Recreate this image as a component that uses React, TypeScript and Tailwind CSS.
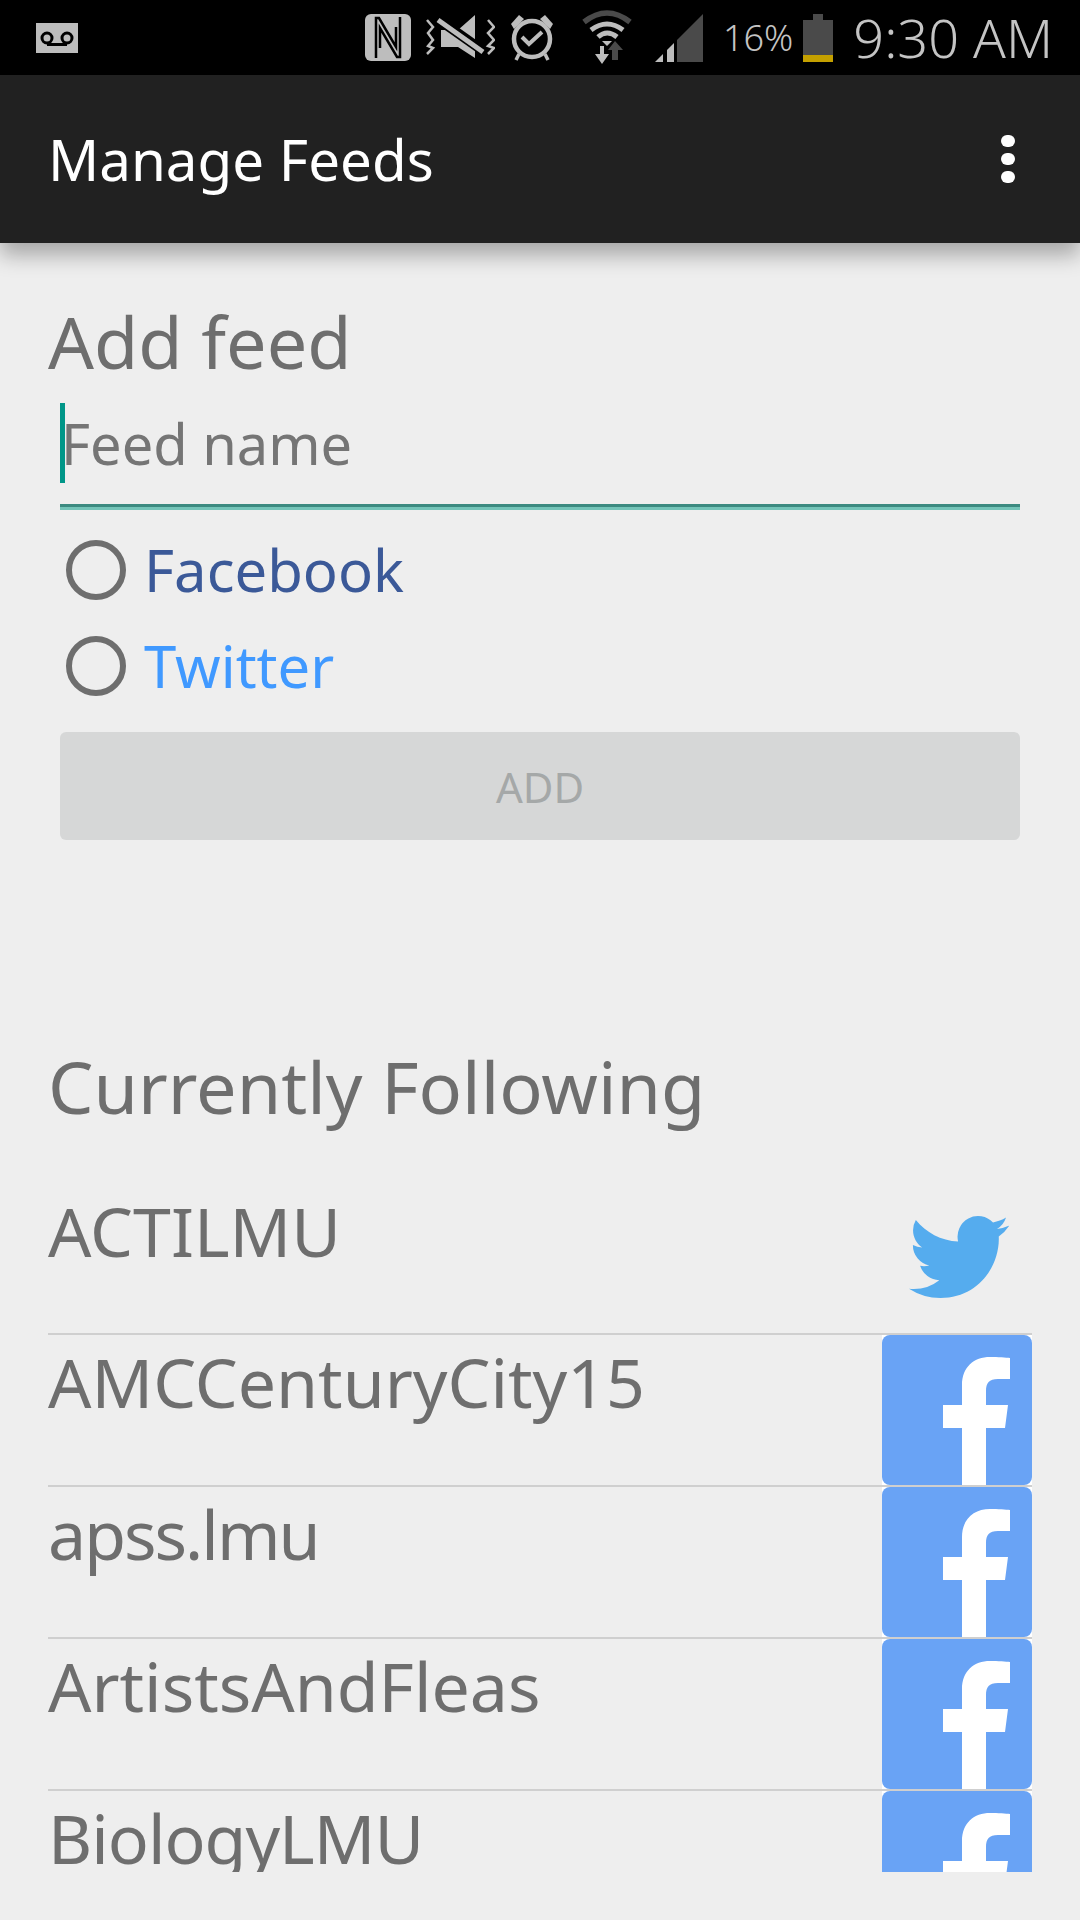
const FEEDS = [
  { name: 'AMCCenturyCity15', tracking: '' },
  { name: 'apss.lmu', tracking: 'tracking-[-2px]' },
  { name: 'ArtistsAndFleas', tracking: '' },
  { name: 'BiologyLMU', tracking: 'tracking-[-1px]' },
]

function Voicemail() {
  return (
    <svg width="42" height="30" viewBox="0 0 42 30">
      <rect width="42" height="30" fill="#bdbdbd" />
      <circle cx="11" cy="15" r="5" fill="none" stroke="#000" strokeWidth="3" />
      <circle cx="31" cy="15" r="5" fill="none" stroke="#000" strokeWidth="3" />
      <path d="M11 21.5H31" stroke="#000" strokeWidth="3" />
    </svg>
  )
}

function NfcIcon() {
  return (
    <svg width="46" height="47" viewBox="0 0 46 47">
      <rect width="46" height="47" rx="6" fill="#bdbdbd" />
      <path d="M11 44V4H14L31 33V13" fill="none" stroke="#000" strokeWidth="2.5" />
      <path d="M35 3V43H32L15 14V34" fill="none" stroke="#000" strokeWidth="2.5" />
    </svg>
  )
}

function MuteVibrate() {
  return (
    <svg width="69" height="45" viewBox="0 0 69 45">
      <path d="M15 15H32L49 0V43L32 32H15Z" fill="#bdbdbd" />
      <path d="M9 2L60 38" stroke="#000" strokeWidth="10" />
      <path d="M12 5L57 37" stroke="#bdbdbd" strokeWidth="5" />
      <path d="M1 5L7 12L2 18L7 25L2 31L7 33L1 39" fill="none" stroke="#bdbdbd" strokeWidth="2.5" />
      <path d="M62 5L68 12L62 18L68 25L62 31L68 33L62 39" fill="none" stroke="#bdbdbd" strokeWidth="2.5" />
    </svg>
  )
}

function AlarmIcon() {
  return (
    <svg width="44" height="47" viewBox="0 0 44 47">
      <circle cx="22" cy="25" r="18" fill="none" stroke="#bdbdbd" strokeWidth="4.5" />
      <path d="M1 10L9 1L14 5L4 15Z" fill="#bdbdbd" />
      <path d="M43 10L35 1L30 5L40 15Z" fill="#bdbdbd" />
      <path d="M12 23L19 30L32 18" fill="none" stroke="#bdbdbd" strokeWidth="4" />
      <path d="M9 40L6 46M35 40L38 46" stroke="#bdbdbd" strokeWidth="3.5" />
    </svg>
  )
}

function WifiIcon() {
  return (
    <svg width="52" height="56" viewBox="0 0 52 56">
      <path d="M2 12Q25 -6 48 12" fill="none" stroke="#4a4a4a" strokeWidth="5.5" />
      <path d="M9 20Q25 8 41 20" fill="none" stroke="#bdbdbd" strokeWidth="5" />
      <path d="M16 27Q25 19 35 27" fill="none" stroke="#bdbdbd" strokeWidth="5" />
      <path d="M20 31H30L25 36Z" fill="#bdbdbd" />
      <path d="M18 36H22V44H27L20 54L13 44H18Z" fill="#bdbdbd" />
      <path d="M30 50V40H26L33 31L41 40H36V50Z" fill="#4a4a4a" />
    </svg>
  )
}

function SignalIcon() {
  return (
    <svg width="48" height="48" viewBox="0 0 48 48">
      <path d="M0 48H8V40Z" fill="#bdbdbd" />
      <path d="M12 48H19V29L12 36Z" fill="#bdbdbd" />
      <path d="M22 48H48V0L22 26Z" fill="#4a4a4a" />
    </svg>
  )
}

function BatteryIcon() {
  return (
    <svg width="30" height="48" viewBox="0 0 30 48">
      <path d="M10 0H20V6H30V48H0V6H10Z" fill="#4a4a4a" />
      <rect y="41" width="30" height="7" fill="#c4a000" />
    </svg>
  )
}

function TwitterBird() {
  return (
    <svg width="100" height="84" viewBox="0 2 24 20" preserveAspectRatio="none">
      <path
        fill="#55acee"
        d="M23.953 4.57a10 10 0 01-2.825.775 4.958 4.958 0 002.163-2.723c-.951.555-2.005.959-3.127 1.184a4.92 4.92 0 00-8.384 4.482C7.69 8.095 4.067 6.13 1.64 3.162a4.822 4.822 0 00-.666 2.475c0 1.71.87 3.213 2.188 4.096a4.904 4.904 0 01-2.228-.616v.06a4.923 4.923 0 003.946 4.827 4.996 4.996 0 01-2.212.085 4.936 4.936 0 004.604 3.417 9.867 9.867 0 01-6.102 2.105c-.39 0-.779-.023-1.17-.067a13.995 13.995 0 007.557 2.209c9.053 0 13.998-7.496 13.998-13.985 0-.21 0-.42-.015-.63A9.935 9.935 0 0024 4.59z"
      />
    </svg>
  )
}

function FacebookTile() {
  return (
    <svg width="150" height="150" viewBox="0 0 150 150" className="shrink-0">
      <rect width="150" height="150" fill="#fff" />
      <rect width="150" height="150" rx="8" fill="#69a3f5" />
      <path
        fill="#fff"
        d="M80 150V93H61V70H80V50C80 32 92 22 108 22C116 22 124 22.5 128 23V44H116C107 44 104 48 104 56V70H126L123 93H104V150Z"
      />
    </svg>
  )
}

function Radio({ label, color }: { label: string; color: string }) {
  return (
    <div className="flex h-[60px] items-center pl-[6px]">
      <div className="h-[60px] w-[60px] rounded-full border-[6px] border-[#6e6e6e]" />
      <span className={`ml-[18px] ${color} text-[58px] leading-[60px]`}>{label}</span>
    </div>
  )
}

export default function App() {
  return (
    <div className="h-[1920px] w-[1080px] overflow-hidden bg-[#eeeeee] font-['Noto_Sans',sans-serif]">
      <div className="flex h-[75px] items-center bg-black pl-9 pr-[27px]">
        <Voicemail />
        <div className="ml-auto flex items-center">
          <NfcIcon />
          <div className="ml-[15px]"><MuteVibrate /></div>
          <div className="ml-[15px]"><AlarmIcon /></div>
          <div className="ml-7"><WifiIcon /></div>
          <div className="ml-[21px]"><SignalIcon /></div>
          <span className="ml-5 text-[36px] font-light leading-[75px] text-[#c4c4c4]">16%</span>
          <div className="ml-[10px]"><BatteryIcon /></div>
          <span className="ml-5 text-[54px] font-light leading-[75px] text-[#c4c4c4]">9:30 AM</span>
        </div>
      </div>

      <header className="relative z-10 flex h-[168px] items-center justify-between bg-[#212121] pl-12 pr-[65px] shadow-[0_12px_20px_rgba(0,0,0,0.3)]">
        <h1 className="pt-[2px] text-[56.5px] font-normal text-white">Manage Feeds</h1>
        <div className="flex flex-col gap-[6px]">
          <div className="h-3 w-[14px] rounded-full bg-white" />
          <div className="h-3 w-[14px] rounded-full bg-white" />
          <div className="h-3 w-[14px] rounded-full bg-white" />
        </div>
      </header>

      <main className="pl-12 pt-[56px]">
        <h2 className="h-[84px] text-[72px] leading-[84px] text-[#6e6e6e]">Add feed</h2>

        <div className="ml-3 mt-5 w-[960px]">
          <div className="flex h-[101px] items-start">
            <div className="h-20 w-[5px] bg-[#009688]" />
            <span className="-ml-1 text-[56px] leading-[80px] text-[#757575]">Feed name</span>
          </div>
          <div className="h-[3px] bg-[#3c8a80]" />
          <div className="h-[3px] bg-[#74c4b8]" />

          <div className="mt-[30px] flex flex-col gap-9">
            <Radio label="Facebook" color="text-[#3b5998]" />
            <Radio label="Twitter" color="text-[#4099ff]" />
          </div>

          <button className="mt-9 flex h-[108px] w-full items-center justify-center rounded-[6px] bg-[#d6d7d7] text-[42px] text-[#a5a8a8]">
            ADD
          </button>
        </div>

        <h2 className="mt-[204px] h-[84px] text-[72px] leading-[84px] text-[#6e6e6e]">Currently Following</h2>

        <div className="mt-14 h-[688px] w-[984px] overflow-hidden">
          <div className="flex h-[149px] justify-between">
            <span className="mt-[5px] text-[68px] leading-[84px] text-[#6e6e6e]">ACTILMU</span>
            <div className="flex w-[150px] items-center justify-center pb-1 pl-[3px]"><TwitterBird /></div>
          </div>
          {FEEDS.map((f) => (
            <div key={f.name}>
              <div className="h-[2px] bg-[#cfcfcf]" />
              <div className="flex h-[150px] justify-between">
                <span className={`mt-[5px] text-[68px] leading-[84px] text-[#6e6e6e] ${f.tracking}`}>{f.name}</span>
                <FacebookTile />
              </div>
            </div>
          ))}
        </div>
      </main>
    </div>
  )
}
